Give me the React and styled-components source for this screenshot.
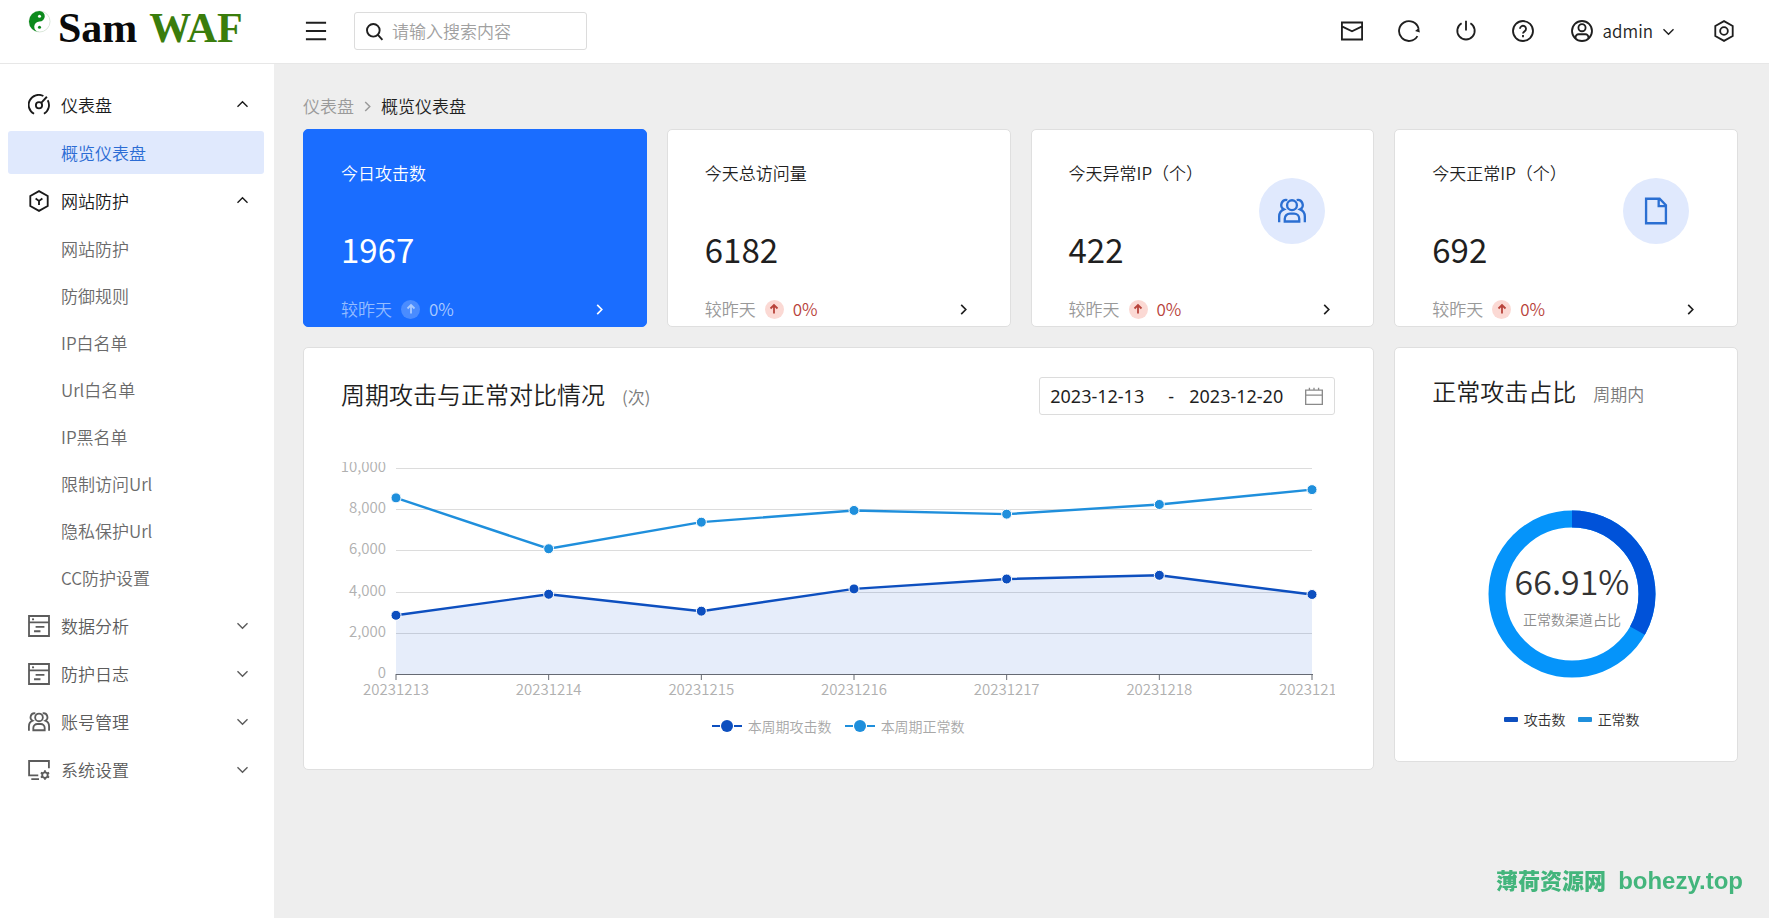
import React, { useLayoutEffect, useRef, useState } from "react";
import styled, { createGlobalStyle } from "styled-components";

const GlobalStyle = createGlobalStyle`
  *, *::before, *::after { box-sizing: border-box; }
  body {
    margin: 0;
    background: #eeeeee;
    color: #1f1f1f;
    font-family: "Noto Sans CJK SC", "Noto Sans", sans-serif;
    font-size: 17px;
    line-height: 24px;
    font-weight: 350;
  }
  button, input { font: inherit; color: inherit; }
  h2, p, ul, ol { margin: 0; padding: 0; font-weight: inherit; list-style: none; }
`;

/* ---------- icons ---------- */

const Svg = styled.svg`
  display: block;
  flex: none;
  fill: none;
  stroke: currentColor;
  stroke-width: ${(p) => p.$stroke || 2};
`;

const Icon = ({ size = 22, stroke, box = "0 0 24 24", children }) => (
  <Svg width={size} height={size} viewBox={box} $stroke={stroke} aria-hidden="true">
    {children}
  </Svg>
);

const ICONS = {
  menu: <path d="M1 3h22M1 12h22M1 21h22" />,
  search: (
    <>
      <circle cx="10.5" cy="10.5" r="8" />
      <path d="M16 16l6 6.5" />
    </>
  ),
  mail: <path d="M1 2.700h22v18.600H1zM1 7l11 5.300L23 7" />,
  refresh: (
    <>
      <path d="M21.200 17.600A10.800 10.800 0 1 1 22.400 9.400" />
      <path d="M18.600 12l4.400-3.600.800 5.200z" fill="currentColor" stroke="none" />
    </>
  ),
  power: (
    <>
      <path d="M12 .8v10.600" />
      <path d="M7.200 3.600a9.500 9.500 0 1 0 9.600 0" />
    </>
  ),
  help: (
    <>
      <circle cx="12" cy="12" r="10.900" />
      <path d="M8.700 9.600a3.300 3.300 0 1 1 5 2.800c-1.100.7-1.700 1.200-1.700 2.400M12 16.400v2.300" />
    </>
  ),
  user: (
    <>
      <circle cx="12" cy="12" r="10.900" />
      <circle cx="12" cy="8.400" r="3.900" />
      <path d="M5 20v-1.300a3.200 3.200 0 0 1 3.200-3.200h7.600a3.200 3.200 0 0 1 3.200 3.200V20" />
    </>
  ),
  setting: (
    <>
      <path d="M12 1.200l9.500 5.400v10.800L12 22.800l-9.500-5.400V6.600z" />
      <circle cx="12" cy="12" r="4.200" />
    </>
  ),
  dashboard: (
    <>
      <path d="M6.600 21.600A10.900 10.900 0 0 1 16.800 2.200M17.400 21.600A10.900 10.900 0 0 0 21.500 6.800" />
      <circle cx="12" cy="12.200" r="3.400" />
      <path d="M14.400 9.600L20.600 3" />
    </>
  ),
  shield: (
    <>
      <path d="M12 1.200l9.500 5.400v10.800L12 22.800l-9.500-5.400V6.600z" />
      <path d="M8.300 9.400L12 12l3.700-2.600M12 12v4.400" />
    </>
  ),
  form: (
    <>
      <path d="M1.100 1.100h21.800v21.800H1.100zM1.100 8h21.800M8.300 13h9.600M6.600 17.700h7" />
      <path d="M4.400 4.700h2.200" />
    </>
  ),
  users: (
    <>
      <circle cx="12" cy="7" r="4.200" />
      <path d="M5.800 21v-2.400a4.400 4.400 0 0 1 4.400-4.400h3.600a4.400 4.400 0 0 1 4.400 4.400V21z" />
      <path d="M8 2.600a4.300 4.300 0 0 0-2.900 8c-2.600 1-4.100 3.200-4.100 6.200V21.600M16 2.600a4.300 4.300 0 0 1 2.900 8c2.600 1 4.100 3.200 4.100 6.200V21.600" />
    </>
  ),
  system: (
    <>
      <path d="M22.800 10V2.200H1.200v15.600h10M3.600 21.900h8.400" />
      <circle cx="18.500" cy="17.500" r="3" />
      <path d="M18.500 12.300v2.200M18.500 20.500v2.200M14 14.900l1.900 1.100M21.100 19l1.900 1.100M23 14.900L21.100 16M15.900 19L14 20.100" />
    </>
  ),
  file: <path d="M3.500 1.500h11.600L20.500 7v15.500h-17zM14.300 1.500v6.300h6.200" />,
  calendar: <path d="M2 5h20v17H2zM2 11h20M6.500 2v3M12 2v3M17.500 2v3" />,
  up: <path d="M12 21V4M5 11l7-7 7 7" />,
  chevronDown: <path d="M1 7l11 11L23 7" />,
  chevronUp: <path d="M1 17L12 6l11 11" />,
  chevronRight: <path d="M7 2l10 10L7 22" />,
};

/* ---------- header ---------- */

const Header = styled.header`
  display: flex;
  align-items: center;
  height: 64px;
  padding: 0 34px 8px 28px;
  background: #fff;
  border-bottom: 1px solid #e7e7e7;
`;

const Logo = styled.a`
  display: flex;
  align-items: center;
  gap: 7px;
  width: 277px;
  color: #0a0a0a;
  text-decoration: none;
  font: bold 42px/48px "Liberation Serif", serif;

  svg { margin-bottom: 12px; }
  strong { margin-left: 5px; color: #3a7d0c; }
`;

const IconButton = styled.button`
  display: flex;
  align-items: center;
  gap: 10px;
  padding: 0;
  border: 0;
  background: none;
  cursor: pointer;
`;

const UserButton = styled(IconButton)`
  margin: 0 4px 0 2px;
`;

const SearchBox = styled.label`
  display: flex;
  align-items: center;
  gap: 8px;
  width: 233px;
  height: 38px;
  margin-left: 27px;
  padding: 0 10px;
  border: 1px solid #dcdcdc;
  border-radius: 3px;

  input {
    width: 100%;
    min-width: 0;
    padding: 0;
    border: 0;
    outline: 0;
    background: none;
  }
  input::placeholder { color: #a0a0a0; opacity: 1; }
`;

const HeaderTools = styled.div`
  display: flex;
  align-items: center;
  gap: 35px;
  margin-left: auto;
`;

const HeaderBar = styled.div`
  display: flex;
  align-items: center;
  flex: 1;
  padding-top: 7px;
`;

/* ---------- sidebar ---------- */

const Shell = styled.div`
  display: flex;
  min-height: calc(100vh - 64px);
`;

const Sidebar = styled.nav`
  flex: none;
  width: 274px;
  padding: 19px 10px 20px 8px;
  background: #fff;
`;

const MenuList = styled.ul`
  display: flex;
  flex-direction: column;
  gap: 5px;
`;

const SubList = styled.ul`
  display: flex;
  flex-direction: column;
  gap: 4px;
  margin-top: 5px;
`;

const MenuHead = styled.button`
  display: flex;
  align-items: center;
  gap: 11px;
  width: 100%;
  height: 43px;
  padding: 0 16px 0 20px;
  border: 0;
  background: none;
  color: ${(p) => (p.$open ? "#1a1a1a" : "#5c5c5c")};
  cursor: pointer;

  span { flex: 1; text-align: left; }
`;

const SubLink = styled.a`
  display: flex;
  align-items: center;
  height: 43px;
  padding-left: 53px;
  border-radius: 3px;
  color: ${(p) => (p.$active ? "#2b6cd4" : "#6a6a6a")};
  background: ${(p) => (p.$active ? "#e0e9fd" : "transparent")};
  text-decoration: none;
`;

/* ---------- content ---------- */

const Main = styled.main`
  flex: 1;
  min-width: 0;
  padding: 30px 31px 40px 29px;
`;

const Breadcrumb = styled.ol`
  display: flex;
  align-items: center;
  gap: 8px;
  margin-bottom: 11px;
  color: #9a9a9a;

  li { display: flex; }
  li:last-child { color: #1f1f1f; }
`;

const Grid = styled.div`
  display: grid;
  grid-template-columns: repeat(4, minmax(0, 1fr));
  gap: 20px;
  align-items: start;
`;

const Card = styled.section`
  border: 1px solid #dfdfdf;
  border-radius: 5px;
  background: #fff;
`;

const StatCard = styled(Card)`
  padding: 31px 38px 5px 37px;
  ${(p) =>
    p.$primary &&
    `
    background: #1a6dff;
    border-color: #1a6dff;
    color: #fff;
  `}
`;

const StatTop = styled.div`
  display: flex;
  justify-content: space-between;
`;

const StatValue = styled.p`
  margin-top: 42px;
  font-size: 33px;
  font-weight: 400;
  line-height: 44px;
`;

const StatBadge = styled.span`
  display: flex;
  align-items: center;
  justify-content: center;
  width: 66px;
  height: 66px;
  margin: 17px 10px 0 0;
  border-radius: 50%;
  background: #e0e9fd;
  color: #2b6fd2;
`;

const StatFoot = styled.div`
  display: flex;
  align-items: center;
  margin-top: 26px;
  gap: 9px;
  color: ${(p) => (p.$primary ? "#93bcff" : "#999999")};

  button { margin: 0 3px 0 auto; color: ${(p) => (p.$primary ? "#fff" : "#1f1f1f")}; }
`;

const Trend = styled.span`
  display: flex;
  align-items: center;
  gap: 9px;
  color: ${(p) => (p.$primary ? "#a9caff" : "#b8433b")};

  i {
    display: flex;
    align-items: center;
    justify-content: center;
    width: 19px;
    height: 19px;
    border-radius: 50%;
    background: ${(p) => (p.$primary ? "#4a8cff" : "#fbd9d4")};
  }
`;

const ChartCard = styled(Card)`
  grid-column: span 3;
  padding: 28px 38px 33px 37px;
`;

const PieCard = styled(Card)`
  padding: 25px 26px 32px 37px;
`;

const CardHead = styled.div`
  display: flex;
  align-items: center;
  justify-content: space-between;
`;

const Title = styled.h2`
  display: flex;
  align-items: baseline;
  gap: 17px;
  font-size: 24px;
  line-height: 36px;

  small { font-size: 17px; color: #7a7a7a; }
`;

const DateRange = styled.div`
  display: flex;
  align-items: center;
  gap: 12px;
  height: 38px;
  padding: 0 10px;
  border: 1px solid #dcdcdc;
  border-radius: 3px;
  font: 400 18px/24px "Noto Sans", sans-serif;

  input {
    width: 103px;
    padding: 0;
    border: 0;
    outline: 0;
    background: none;
  }
  span { width: 12px; text-align: center; }
  svg { color: #8a8a8a; }
`;

const LineBox = styled.div`
  margin-top: 47px;
  overflow: hidden;

  svg { display: block; }
  text { font-size: 15px; fill: #b0b0b0; }
`;

const Legend = styled.ul`
  display: flex;
  justify-content: center;
  gap: ${(p) => p.$gap};
  margin-top: ${(p) => p.$top};
  color: ${(p) => p.$color};
  font-size: 14px;
  line-height: 20px;

  li { display: flex; align-items: center; gap: 6px; }
`;

const Swatch = styled.span`
  width: 14px;
  height: 5px;
  border-radius: 1px;
  background: ${(p) => p.$color};
`;

const Donut = styled.svg`
  display: block;
  margin: 98px auto 0;

  text { text-anchor: middle; }
`;

const Watermark = styled.aside`
  position: fixed;
  right: 26px;
  bottom: 23px;
  display: flex;
  align-items: baseline;
  gap: 12px;
  color: #43b57c;
  font: 900 22px/28px "Noto Sans CJK SC", sans-serif;

  b { font: bold 24px/28px "Liberation Sans", sans-serif; }
`;

/* ---------- data ---------- */

const MENU = [
  { icon: "dashboard", label: "仪表盘", items: ["概览仪表盘"] },
  {
    icon: "shield",
    label: "网站防护",
    items: ["网站防护", "防御规则", "IP白名单", "Url白名单", "IP黑名单", "限制访问Url", "隐私保护Url", "CC防护设置"],
  },
  { icon: "form", label: "数据分析" },
  { icon: "form", label: "防护日志" },
  { icon: "users", label: "账号管理" },
  { icon: "system", label: "系统设置" },
];

const STATS = [
  { title: "今日攻击数", value: "1967", primary: true },
  { title: "今天总访问量", value: "6182" },
  { title: "今天异常IP（个）", value: "422", icon: "users" },
  { title: "今天正常IP（个）", value: "692", icon: "file" },
];

const DAYS = ["20231213", "20231214", "20231215", "20231216", "20231217", "20231218", "20231219"];
const SERIES = [
  { name: "本周期攻击数", color: "#0d4fbf", values: [2850, 3870, 3050, 4130, 4610, 4790, 3860], area: true },
  { name: "本周期正常数", color: "#1f8fdc", values: [8550, 6080, 7370, 7940, 7760, 8230, 8950] },
];

/* ---------- charts ---------- */

const PLOT = { left: 55, right: 23, top: 6, bottom: 212, height: 239 };

function LineChart() {
  const ref = useRef(null);
  const [width, setWidth] = useState(994);

  useLayoutEffect(() => {
    const measure = () => setWidth(ref.current.clientWidth);
    measure();
    const observer = new ResizeObserver(measure);
    observer.observe(ref.current);
    return () => observer.disconnect();
  }, []);

  const step = (width - PLOT.left - PLOT.right) / (DAYS.length - 1);
  const x = (i) => PLOT.left + i * step;
  const y = (v) => PLOT.bottom - (v / 10000) * (PLOT.bottom - PLOT.top);
  const end = width - PLOT.right;

  return (
    <LineBox ref={ref}>
      <svg width={width} height={PLOT.height} role="img" aria-label="周期攻击与正常对比情况">
        {[10000, 8000, 6000, 4000, 2000, 0].map((v) => (
          <g key={v}>
            {v > 0 && (
              <line x1={PLOT.left} x2={end} y1={Math.round(y(v)) + 0.5} y2={Math.round(y(v)) + 0.5} stroke="#dcdcdc" />
            )}
            <text x={PLOT.left - 10} y={Math.round(y(v)) + 4} textAnchor="end">
              {v.toLocaleString("en-US")}
            </text>
          </g>
        ))}
        {SERIES.map((s) => {
          const points = s.values.map((v, i) => `${x(i)},${y(v)}`).join(" ");
          return (
            <g key={s.name}>
              {s.area && (
                <polygon
                  points={`${x(0)},${PLOT.bottom} ${points} ${end},${PLOT.bottom}`}
                  fill="#0d4fd0"
                  fillOpacity="0.1"
                />
              )}
              <polyline points={points} fill="none" stroke={s.color} strokeWidth="2.4" />
              {s.values.map((v, i) => (
                <circle key={i} cx={x(i)} cy={y(v)} r="5" fill={s.color} stroke="#fff" strokeWidth="1" />
              ))}
            </g>
          );
        })}
        <line x1={PLOT.left} x2={end + 1} y1={PLOT.bottom + 0.5} y2={PLOT.bottom + 0.5} stroke="#666a73" />
        {DAYS.map((day, i) => (
          <g key={day}>
            <line x1={x(i)} x2={x(i)} y1={PLOT.bottom} y2={PLOT.bottom + 6} stroke="#666a73" />
            <text x={x(i)} y={PLOT.bottom + 21} textAnchor="middle">
              {day}
            </text>
          </g>
        ))}
      </svg>
    </LineBox>
  );
}

function PieChart({ share }) {
  const ring = 2 * Math.PI * 75;
  const rest = ring * (1 - share / 100);
  return (
    <Donut width="168" height="168" viewBox="-84 -84 168 168" role="img" aria-label="正常攻击占比">
      <g fill="none" strokeWidth="17" transform="rotate(-90)">
        <circle r="75" stroke="#0594fa" />
        <circle r="75" stroke="#0052d9" strokeDasharray={`${rest} ${ring}`} />
      </g>
      <text y="1" fontSize="34" fill="#333">
        {share}%
      </text>
      <text y="31" fontSize="14" fill="#8c8c8c">
        正常数渠道占比
      </text>
    </Donut>
  );
}

/* ---------- page ---------- */

export default function App() {
  return (
    <>
      <GlobalStyle />
      <Header>
        <Logo href="#">
          <svg width="23" height="23" viewBox="-12 -12 24 24" aria-hidden="true">
            <circle r="11" fill="#fff" stroke="#d8e6d8" />
            <path d="M0-11A11 11 0 0 0 0 11A5.500 5.500 0 0 1 0 0A5.500 5.500 0 0 0 0-11z" fill="#0c8a1c" />
            <circle cy="-5.500" r="1.600" fill="#fff" />
            <circle cy="6" r="1.600" fill="#0c8a1c" />
          </svg>
          <span>Sam</span>
          <strong>WAF</strong>
        </Logo>
        <HeaderBar>
          <IconButton type="button" aria-label="菜单">
            <Icon>{ICONS.menu}</Icon>
          </IconButton>
          <SearchBox>
            <Icon size={19} stroke={2.4}>{ICONS.search}</Icon>
            <input type="text" placeholder="请输入搜索内容" aria-label="搜索" />
          </SearchBox>
          <HeaderTools>
            {[
              ["mail", "消息"],
              ["refresh", "刷新"],
              ["power", "退出"],
              ["help", "帮助"],
            ].map(([name, label]) => (
              <IconButton key={name} type="button" aria-label={label}>
                <Icon>{ICONS[name]}</Icon>
              </IconButton>
            ))}
            <UserButton type="button">
              <Icon>{ICONS.user}</Icon>
              admin
              <Icon size={11} stroke={3.2}>{ICONS.chevronDown}</Icon>
            </UserButton>
            <IconButton type="button" aria-label="设置">
              <Icon>{ICONS.setting}</Icon>
            </IconButton>
          </HeaderTools>
        </HeaderBar>
      </Header>
      <Shell>
        <Sidebar aria-label="主菜单">
          <MenuList>
            {MENU.map(({ icon, label, items }) => (
              <li key={label}>
                <MenuHead type="button" $open={!!items} aria-expanded={!!items}>
                  <Icon>{ICONS[icon]}</Icon>
                  <span>{label}</span>
                  <Icon size={11} stroke={3.2}>{items ? ICONS.chevronUp : ICONS.chevronDown}</Icon>
                </MenuHead>
                {items && (
                  <SubList>
                    {items.map((item) => (
                      <li key={item}>
                        <SubLink href="#" $active={item === "概览仪表盘"}>
                          {item}
                        </SubLink>
                      </li>
                    ))}
                  </SubList>
                )}
              </li>
            ))}
          </MenuList>
        </Sidebar>
        <Main>
          <Breadcrumb>
            <li>仪表盘</li>
            <li aria-hidden="true">
              <Icon size={11} stroke={3.2}>{ICONS.chevronRight}</Icon>
            </li>
            <li>概览仪表盘</li>
          </Breadcrumb>
          <Grid>
            {STATS.map(({ title, value, icon, primary }) => (
              <StatCard key={title} $primary={primary}>
                <StatTop>
                  <div>
                    <p>{title}</p>
                    <StatValue>{value}</StatValue>
                  </div>
                  {icon && (
                    <StatBadge>
                      <Icon size={28}>{ICONS[icon]}</Icon>
                    </StatBadge>
                  )}
                </StatTop>
                <StatFoot $primary={primary}>
                  较昨天
                  <Trend $primary={primary}>
                    <i>
                      <Icon size={12} stroke={3.6}>{ICONS.up}</Icon>
                    </i>
                    0%
                  </Trend>
                  <IconButton type="button" aria-label="查看详情">
                    <Icon size={11} stroke={3.6}>{ICONS.chevronRight}</Icon>
                  </IconButton>
                </StatFoot>
              </StatCard>
            ))}
            <ChartCard>
              <CardHead>
                <Title>
                  周期攻击与正常对比情况 <small>(次)</small>
                </Title>
                <DateRange>
                  <input type="text" defaultValue="2023-12-13" aria-label="开始日期" />
                  <span>-</span>
                  <input type="text" defaultValue="2023-12-20" aria-label="结束日期" />
                  <Icon size={20} stroke={1.6}>{ICONS.calendar}</Icon>
                </DateRange>
              </CardHead>
              <LineChart />
              <Legend $gap="13px" $top="15px" $color="#a8a8a8">
                {SERIES.map(({ name, color }) => (
                  <li key={name}>
                    <svg width="30" height="16" aria-hidden="true">
                      <path d="M0 8h8M22 8h8" stroke={color} strokeWidth="2" />
                      <circle cx="15" cy="8" r="6" fill={color} />
                    </svg>
                    {name}
                  </li>
                ))}
              </Legend>
            </ChartCard>
            <PieCard>
              <Title>
                正常攻击占比 <small>周期内</small>
              </Title>
              <PieChart share={66.91} />
              <Legend $gap="12px" $top="31px" $color="#333333">
                <li>
                  <Swatch $color="#0d4fbf" />
                  攻击数
                </li>
                <li>
                  <Swatch $color="#1f8fdc" />
                  正常数
                </li>
              </Legend>
            </PieCard>
          </Grid>
        </Main>
      </Shell>
      <Watermark>
        薄荷资源网 <b>bohezy.top</b>
      </Watermark>
    </>
  );
}
